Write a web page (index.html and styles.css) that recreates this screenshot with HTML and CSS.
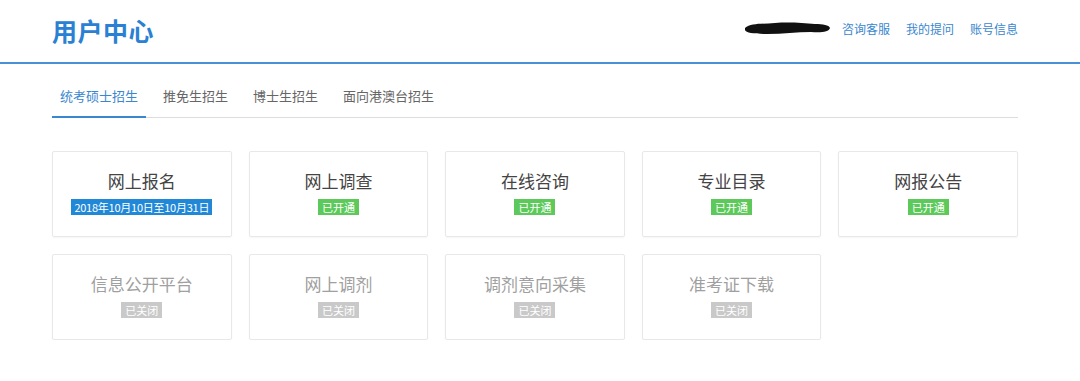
FILE: index.html
```html
<!DOCTYPE html>
<html lang="zh-CN">
<head>
    <meta charset="UTF-8">
    <title>用户中心</title>
    <link rel="stylesheet" href="styles.css">
</head>
<body>
    <header class="header">
        <div class="header-inner">
            <a href="#" class="logo">用户中心</a>
            <div class="user-nav">
                <svg class="redact" width="88" height="14" viewBox="0 0 88 14">
                    <path d="M2 7 C 8 2, 20 3, 32 2 C 46 1, 60 2, 72 3 C 80 3, 86 4, 87 7 C 86 11, 78 12, 68 11 C 54 11, 40 13, 24 13 C 12 13, 3 12, 2 9 Z" fill="#111"/>
                </svg>
                <a href="#">咨询客服</a>
                <a href="#">我的提问</a>
                <a href="#">账号信息</a>
            </div>
        </div>
    </header>

    <main class="container">
        <nav class="tabs">
            <a href="#" class="tab active">统考硕士招生</a>
            <a href="#" class="tab">推免生招生</a>
            <a href="#" class="tab">博士生招生</a>
            <a href="#" class="tab">面向港澳台招生</a>
        </nav>

        <section class="cards">
            <div class="card">
                <div class="card-title">网上报名</div>
                <span class="badge badge-date">2018年10月10日至10月31日</span>
            </div>
            <div class="card">
                <div class="card-title">网上调查</div>
                <span class="badge badge-open">已开通</span>
            </div>
            <div class="card">
                <div class="card-title">在线咨询</div>
                <span class="badge badge-open">已开通</span>
            </div>
            <div class="card">
                <div class="card-title">专业目录</div>
                <span class="badge badge-open">已开通</span>
            </div>
            <div class="card">
                <div class="card-title">网报公告</div>
                <span class="badge badge-open">已开通</span>
            </div>
            <div class="card disabled">
                <div class="card-title">信息公开平台</div>
                <span class="badge badge-closed">已关闭</span>
            </div>
            <div class="card disabled">
                <div class="card-title">网上调剂</div>
                <span class="badge badge-closed">已关闭</span>
            </div>
            <div class="card disabled">
                <div class="card-title">调剂意向采集</div>
                <span class="badge badge-closed">已关闭</span>
            </div>
            <div class="card disabled">
                <div class="card-title">准考证下载</div>
                <span class="badge badge-closed">已关闭</span>
            </div>
        </section>
    </main>
</body>
</html>
```

FILE: styles.css
```css
* {
    margin: 0;
    padding: 0;
    box-sizing: border-box;
}

body {
    font-family: "Noto Sans CJK SC", "Noto Sans", sans-serif;
    background-color: #ffffff;
    color: #333333;
}

a {
    text-decoration: none;
}

.header {
    height: 64px;
    border-bottom: 2px solid #4a90d9;
    background-color: #ffffff;
}

.header-inner {
    width: 966px;
    margin-left: 52px;
    height: 62px;
    display: flex;
    justify-content: space-between;
    align-items: center;
}

.logo {
    font-size: 25px;
    font-weight: bold;
    color: #2a80d2;
    letter-spacing: 0.5px;
    line-height: 30px;
    margin-top: -2px;
}

.user-nav {
    display: flex;
    align-items: center;
    gap: 16px;
    margin-top: -6px;
}

.user-nav a {
    font-size: 12px;
    color: #3a87cf;
}

.redact {
    margin-right: -5px;
}

.container {
    width: 966px;
    margin-left: 52px;
}

.tabs {
    display: flex;
    margin-top: 22px;
    border-bottom: 1px solid #dddddd;
}

.tab {
    font-size: 13px;
    line-height: 20px;
    color: #666666;
    padding: 0 8px 10px;
    margin-right: 9px;
    border-bottom: 2px solid transparent;
    margin-bottom: -1px;
}

.tab.active {
    color: #3a87cf;
    border-bottom-color: #3a87cf;
}

.cards {
    display: grid;
    grid-template-columns: repeat(5, 1fr);
    gap: 17px;
    margin-top: 33px;
}

.card {
    height: 86px;
    border: 1px solid #e8e8e8;
    border-radius: 2px;
    box-shadow: 0 1px 2px rgba(0, 0, 0, 0.04);
    display: flex;
    flex-direction: column;
    align-items: center;
    padding-top: 17px;
}

.card-title {
    font-size: 17px;
    line-height: 24px;
    color: #444444;
}

.disabled .card-title {
    color: #a0a0a0;
}

.badge {
    margin-top: 6px;
    font-size: 11px;
    line-height: 16px;
    height: 16px;
    padding: 0 4px;
    color: #ffffff;
}

.badge-date {
    background-color: #2188d8;
    padding: 0 3px;
    letter-spacing: -0.25px;
}

.badge-open {
    background-color: #5cc95a;
}

.badge-closed {
    background-color: #c9c9c9;
}
```
